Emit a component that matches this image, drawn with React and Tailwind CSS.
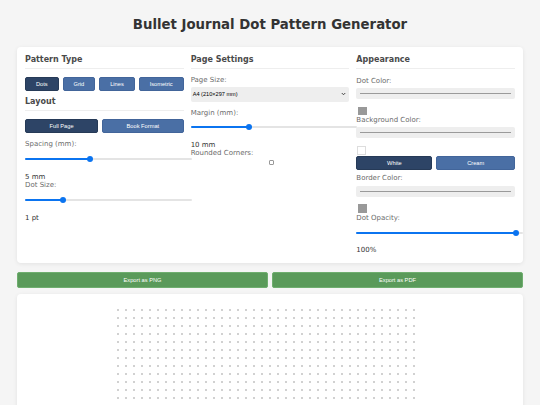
import React from "react";

const label = "block text-[7px] leading-[8px] text-[#6b6b6b]";
const value = "block text-[7px] leading-[8px] text-[#333]";
const heading =
  "text-[8px] leading-[10px] font-bold text-[#4a4a4a] pb-[3px] border-b border-[#eee]";
const btn =
  "flex-auto h-[14px] rounded-[2px] px-[9px] text-[5.7px] text-white font-['Liberation_Sans',Arial,sans-serif] border";
const dark = "bg-[#2d4466] border-[#263a57]";
const light = "bg-[#4a6fa5] border-[#42659a]";

function Slider({ pct }) {
  return (
    <div className="relative flex items-center h-[10px] w-[calc(100%+8px)]">
      <div className="h-[2px] w-full rounded-full bg-[#e4e4e4] overflow-hidden">
        <div className="h-full bg-[#0b74f0]" style={{ width: `${pct}%` }} />
      </div>
      <div
        className="absolute top-1/2 -translate-y-1/2 -translate-x-1/2 size-[6px] rounded-full bg-[#0b74f0]"
        style={{ left: `${pct}%` }}
      />
    </div>
  );
}

function ColorField() {
  return (
    <div className="h-[11.6px] rounded-[2px] bg-[#eeeeee] flex items-center px-[4px]">
      <div className="h-[1px] w-full bg-[#9a9a9a]" />
    </div>
  );
}

function Dots() {
  const cols = Array.from({ length: 38 }, (_, i) => i);
  const rows = Array.from({ length: 58 }, (_, i) => i);
  return (
    <svg width="336" height="475" className="block mx-auto">
      {rows.map((r) =>
        cols.map((c) => (
          <circle key={r + "-" + c} cx={16 + c * 8} cy={16 + r * 8} r="0.75" fill="#8c8c8c" />
        ))
      )}
    </svg>
  );
}

export default function App() {
  return (
    <div className="min-h-screen bg-[#f5f5f5] font-['DejaVu_Sans',Verdana,sans-serif] text-[#333] px-[17px]">
      <h1 className="pt-[17px] text-center text-[13.3px] leading-[16px] font-bold text-[#333]">
        Bullet Journal Dot Pattern Generator
      </h1>

      <div className="mt-[14px] bg-white rounded-[4px] shadow-[0_1px_4px_rgba(0,0,0,0.08)] px-[8px] pt-[8px] pb-[9px] grid grid-cols-3 gap-x-[7px]">
        {/* column 1 */}
        <div>
          <h3 className={heading}>Pattern Type</h3>
          <div className="flex gap-[4px] mt-[8px]">
            <button className={`${btn} ${dark}`}>Dots</button>
            <button className={`${btn} ${light}`}>Grid</button>
            <button className={`${btn} ${light}`}>Lines</button>
            <button className={`${btn} ${light}`}>Isometric</button>
          </div>
          <h3 className={`${heading} mt-[6px]`}>Layout</h3>
          <div className="flex gap-[4px] mt-[8px]">
            <button className={`${btn} ${dark}`}>Full Page</button>
            <button className={`${btn} ${light}`}>Book Format</button>
          </div>
          <span className={`${label} mt-[7px]`}>Spacing (mm):</span>
          <div className="mt-[6px]">
            <Slider pct={39} />
          </div>
          <span className={`${value} mt-[9px]`}>5 mm</span>
          <span className={label}>Dot Size:</span>
          <div className="mt-[6px]">
            <Slider pct={23} />
          </div>
          <span className={`${value} mt-[9px]`}>1 pt</span>
        </div>

        {/* column 2 */}
        <div>
          <h3 className={heading}>Page Settings</h3>
          <span className={`${label} mt-[7px]`}>Page Size:</span>
          <div className="mt-[3px] h-[14.6px] rounded-[2px] bg-[#eeeeee] flex items-center justify-between pl-[2px] pr-[3px] font-['Liberation_Sans',Arial,sans-serif] text-[5.6px] text-black">
            <span>A4 (210×297 mm)</span>
            <svg width="5" height="4" viewBox="0 0 10 8">
              <path d="M1.5 2l3.5 3.5L8.5 2" fill="none" stroke="#333" strokeWidth="1.8" />
            </svg>
          </div>
          <span className={`${label} mt-[7px]`}>Margin (mm):</span>
          <div className="mt-[5px]">
            <Slider pct={35} />
          </div>
          <span className={`${value} mt-[9px]`}>10 mm</span>
          <span className={label}>Rounded Corners:</span>
          <div className="mt-[3.5px] flex justify-center">
            <div className="size-[5px] rounded-[1px] border border-[#999] bg-white ml-[3px]" />
          </div>
        </div>

        {/* column 3 */}
        <div>
          <h3 className={heading}>Appearance</h3>
          <span className={`${label} mt-[8px]`}>Dot Color:</span>
          <div className="mt-[2.7px]">
            <ColorField />
          </div>
          <div className="mt-[7.4px] ml-[2px] size-[8.4px] bg-[#999]" />
          <span className={`${label} mt-[1px]`}>Background Color:</span>
          <div className="mt-[2.7px]">
            <ColorField />
          </div>
          <div className="mt-[7.4px] ml-[1px] size-[9px] bg-white border border-[#ddd]" />
          <div className="flex gap-[4px] mt-[1.3px]">
            <button className={`${btn} ${dark} h-[14.7px]`}>White</button>
            <button className={`${btn} ${light} h-[14.7px]`}>Cream</button>
          </div>
          <span className={`${label} mt-[4.3px]`}>Border Color:</span>
          <div className="mt-[3.5px]">
            <ColorField />
          </div>
          <div className="mt-[7px] ml-[2px] size-[8.4px] bg-[#999]" />
          <span className={`${label} mt-[1px]`}>Dot Opacity:</span>
          <div className="mt-[5.7px]">
            <Slider pct={96} />
          </div>
          <span className={`${value} mt-[8.7px]`}>100%</span>
        </div>
      </div>

      <div className="mt-[9px] flex gap-[4px]">
        <button className="flex-1 h-[15.4px] rounded-[2px] bg-[#5a9a5a] border border-[#6fae6f] text-white text-[5.7px] font-['Liberation_Sans',Arial,sans-serif]">
          Export as PNG
        </button>
        <button className="flex-1 h-[15.4px] rounded-[2px] bg-[#5a9a5a] border border-[#6fae6f] text-white text-[5.7px] font-['Liberation_Sans',Arial,sans-serif]">
          Export as PDF
        </button>
      </div>

      <div className="mt-[6px] bg-white rounded-[4px] shadow-[0_1px_4px_rgba(0,0,0,0.08)] pb-[8px]">
        <Dots />
      </div>
    </div>
  );
}
